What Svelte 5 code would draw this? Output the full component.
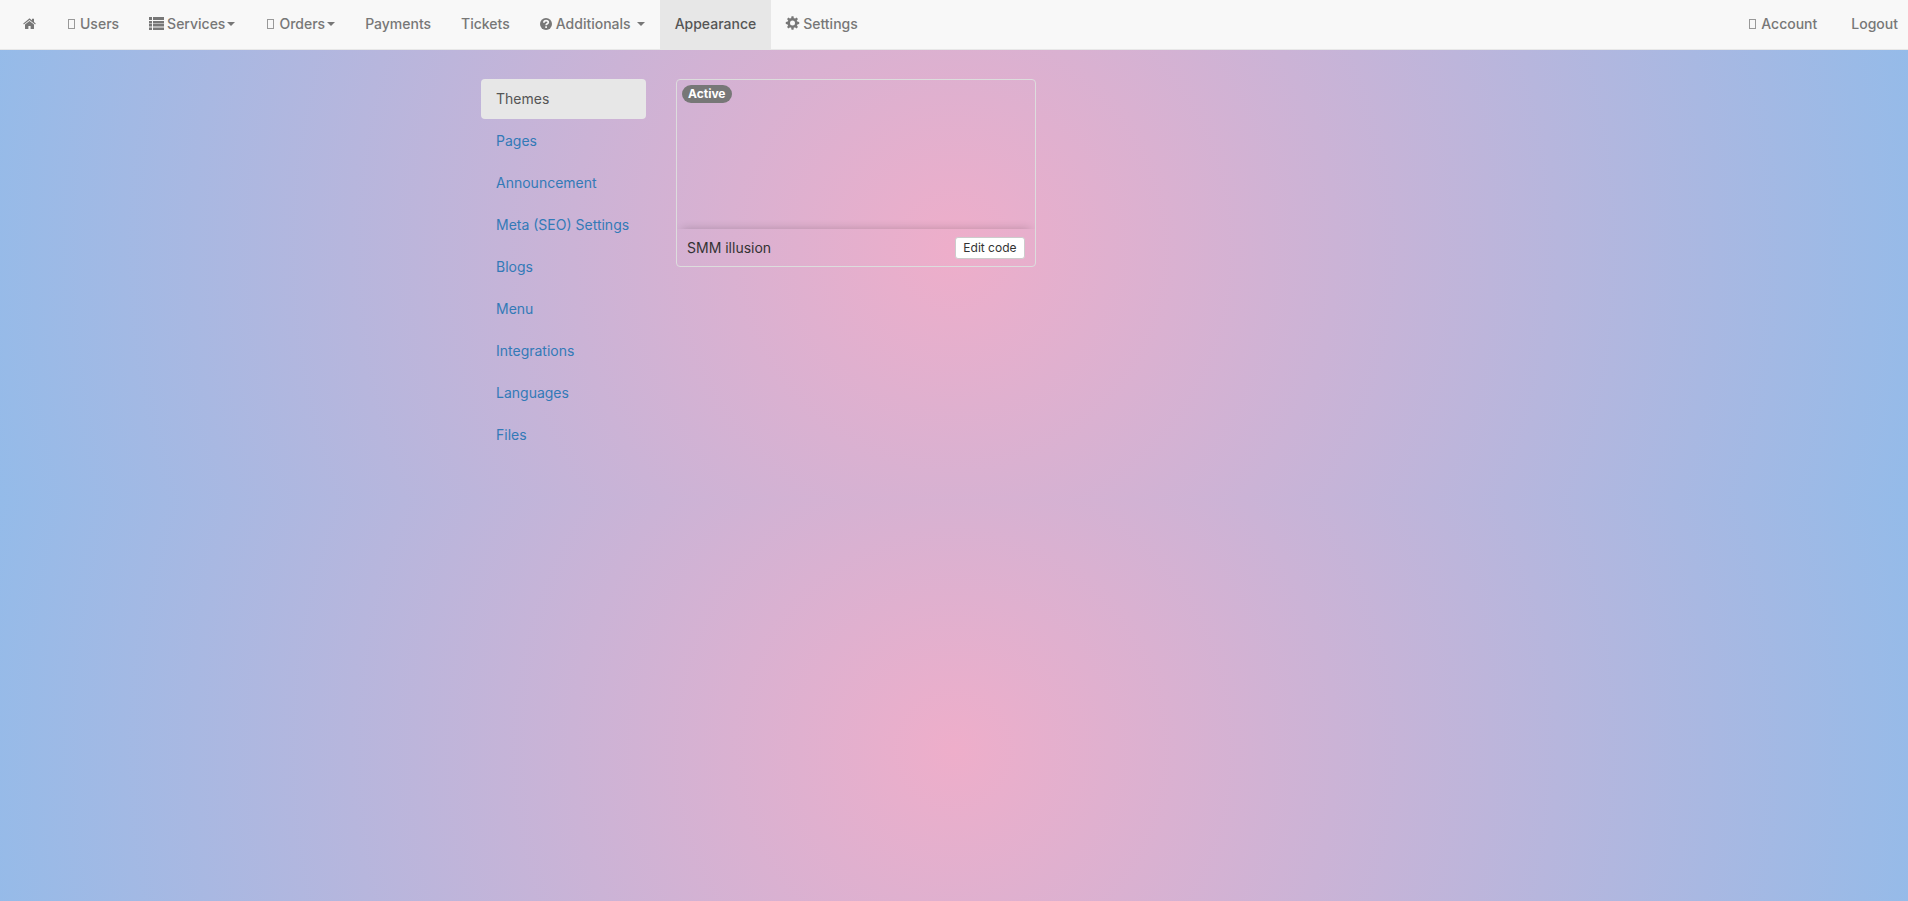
<script>
  const menu = [
    { label: '', icon: 'home', title: 'Home' },
    { label: 'Users', icon: 'box' },
    { label: 'Services', icon: 'list', caret: true },
    { label: 'Orders', icon: 'box', caret: true },
    { label: 'Payments' },
    { label: 'Tickets' },
    { label: 'Additionals', icon: 'question', caret: true, spaced: true },
    { label: 'Appearance', active: true },
    { label: 'Settings', icon: 'cog' },
  ];

  const account = [
    { label: 'Account', icon: 'box' },
    { label: 'Logout' },
  ];

  const sections = [
    'Themes',
    'Pages',
    'Announcement',
    'Meta (SEO) Settings',
    'Blogs',
    'Menu',
    'Integrations',
    'Languages',
    'Files',
  ];

  let current = $state('Themes');
</script>

{#snippet icon(name)}
  {#if name === 'home'}
    <svg class="icon" width="13" height="14" viewBox="0 0 13 14" aria-hidden="true">
      <path d="M6.5 3.9 11 7.6V11.5a.5.5 0 0 1-.5.5H7.6V9H5.4v3H2.5a.5.5 0 0 1-.5-.5V7.6z" />
      <path d="M6.5 1.6c.3 0 .6.1.8.3L9 3.3V2.1c0-.2.1-.3.3-.3h1.4c.2 0 .3.1.3.3V5l1.7 1.4c.1.1.1.3 0 .4l-.4.5c-.1.1-.3.1-.4 0L6.5 2.9 1.1 7.3c-.1.1-.3.1-.4 0l-.4-.5c-.1-.1-.1-.3 0-.4l5.4-4.5c.2-.2.5-.3.8-.3z" />
    </svg>
  {:else if name === 'list'}
    <svg class="icon" width="15" height="14" viewBox="0 0 15 14" aria-hidden="true">
      <path d="M0 0h3v3H0zM4 0h11v3H4zM0 4h3v2.5H0zM4 4h11v2.5H4zM0 7h3v2.5H0zM4 7h11v2.5H4zM0 10.5h3V13H0zM4 10.5h11V13H4z" />
    </svg>
  {:else if name === 'question'}
    <svg class="icon" width="13" height="14" viewBox="0 0 13 14" aria-hidden="true">
      <circle cx="6" cy="7" r="6" />
      <path class="cut" d="M3.9 5.7C3.9 4.3 4.8 3.7 6.1 3.7c1.3 0 2.2.7 2.2 1.7 0 1.4-2.2 1.4-2.2 2.8M6.1 9.3v1.6" />
    </svg>
  {:else if name === 'cog'}
    <svg class="icon" width="14" height="14" viewBox="0 0 14 14" aria-hidden="true">
      <circle class="ring" cx="6.5" cy="6" r="3.8" />
      {#each [0, 45, 90, 135, 180, 225, 270, 315] as angle}
        <path d="M5.1 1.7 5.5-.7h2l.4 2.4z" transform="rotate({angle} 6.5 6)" />
      {/each}
    </svg>
  {:else if name === 'box'}
    <span class="box" aria-hidden="true"></span>
  {/if}
{/snippet}

{#snippet links(items)}
  {#each items as item}
    <li>
      <a href="#top" class:active={item.active} aria-label={item.title}>
        {#if item.icon}{@render icon(item.icon)}{/if}
        {#if item.label}<span>{item.label}</span>{/if}
        {#if item.caret}<b class="caret" class:spaced={item.spaced}></b>{/if}
      </a>
    </li>
  {/each}
{/snippet}

<nav class="navbar">
  <ul>{@render links(menu)}</ul>
  <ul class="right">{@render links(account)}</ul>
</nav>

<main class="container">
  <ul class="sidebar">
    {#each sections as section}
      <li>
        <a href="#top" class:active={current === section} onclick={() => (current = section)}>{section}</a>
      </li>
    {/each}
  </ul>

  <div class="themes">
    <article class="theme">
      <div class="preview"><span class="badge">Active</span></div>
      <div class="footer">
        <span>SMM illusion</span>
        <button type="button">Edit code</button>
      </div>
    </article>
  </div>
</main>

<style>
  :global(html) {
    background: radial-gradient(circle, rgb(238, 174, 202) 0%, rgb(148, 187, 233) 100%);
  }

  :global(body) {
    margin: 0;
    color: #333;
    font: 14px/20px Inter, "Helvetica Neue", Arial, sans-serif;
  }

  ul {
    margin: 0;
    padding: 0;
    list-style: none;
  }

  a {
    text-decoration: none;
  }

  .navbar {
    display: flex;
    justify-content: space-between;
    padding: 0 0 0 8px;
    background: #f8f8f8;
    border-bottom: 1px solid #e7e7e7;
    font-weight: 500;
  }

  .navbar ul {
    display: flex;
  }

  .navbar a {
    display: flex;
    align-items: center;
    gap: 3px;
    height: 20px;
    padding: 14px 15px 15px;
    color: #777;
  }

  .navbar a:hover {
    color: #333;
  }

  .navbar a.active {
    color: #555;
    background: #e7e7e7;
  }

  .navbar .right {
    gap: 4px;
    margin-right: -5px;
  }

  .icon {
    flex: none;
    fill: currentColor;
    overflow: visible;
  }

  .cut {
    fill: none;
    stroke: #f8f8f8;
    stroke-width: 1.7;
  }

  .ring {
    fill: none;
    stroke: currentColor;
    stroke-width: 2.6;
  }

  .box {
    box-sizing: border-box;
    width: 7px;
    height: 10px;
    margin: 0 2px;
    border: 1px solid #999;
  }

  .caret {
    margin-left: -1px;
    border: 4px solid transparent;
    border-top-color: currentColor;
    border-bottom: 0;
  }

  .caret.spaced {
    margin-left: 3px;
  }

  .container {
    display: grid;
    grid-template-columns: 165px 1fr;
    gap: 30px;
    box-sizing: border-box;
    max-width: 1170px;
    margin: 0 auto;
    padding: 29px 114px 45px 112px;
  }

  .sidebar {
    display: grid;
    gap: 2px;
  }

  .sidebar a {
    display: block;
    padding: 10px 15px;
    border-radius: 4px;
    color: #337ab7;
    white-space: nowrap;
  }

  .sidebar a.active {
    color: #555;
    background: #e7e7e7;
  }

  .themes {
    display: grid;
    grid-template-columns: repeat(2, 1fr);
    gap: 30px;
    align-items: start;
  }

  .theme {
    border: 1px solid #ddd;
    border-radius: 4px;
    overflow: hidden;
  }

  .preview {
    box-sizing: border-box;
    height: 149px;
    padding: 5px;
  }

  .badge {
    display: block;
    width: fit-content;
    padding: 3px 6px;
    border-radius: 10px;
    color: #fff;
    background: #777;
    font-size: 12px;
    font-weight: 700;
    line-height: 12px;
  }

  .footer {
    display: flex;
    align-items: center;
    justify-content: space-between;
    padding: 8px 10px 7px;
    box-shadow: 0 -5px 10px -5px rgba(0, 0, 0, 0.2);
  }

  .footer button {
    padding: 1px 7px;
    border: 1px solid #ccc;
    border-radius: 3px;
    color: #333;
    background: #fff;
    font: 12px/18px Inter, "Helvetica Neue", Arial, sans-serif;
    cursor: pointer;
  }
</style>
